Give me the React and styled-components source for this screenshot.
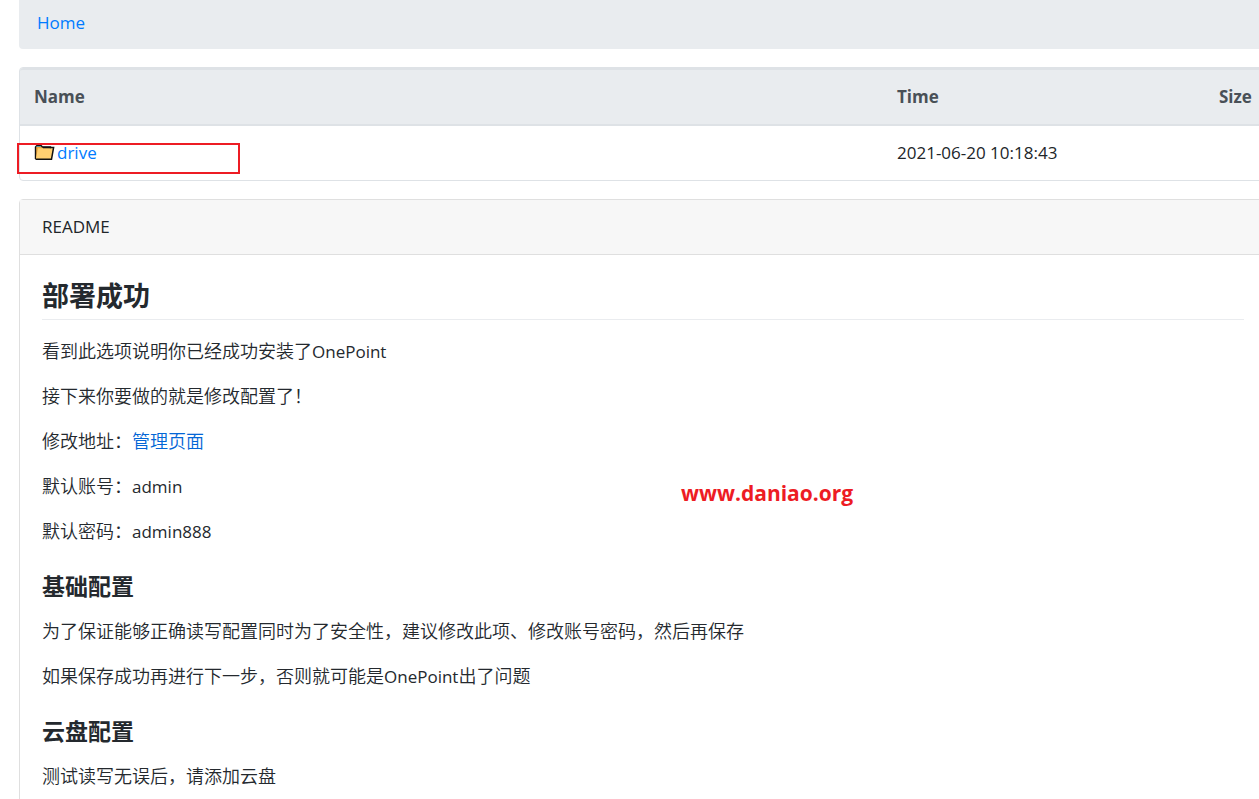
import styled, { createGlobalStyle } from 'styled-components';

const GlobalStyle = createGlobalStyle`
  *, *::before, *::after {
    box-sizing: border-box;
  }

  body {
    margin: 0;
    background: #fff;
    color: #212529;
    font-family: 'Open Sans', 'Noto Sans CJK SC', sans-serif;
    font-size: 17px;
    line-height: 27px;
    overflow-x: hidden;
  }
`;

const Page = styled.div`
  position: relative;
  overflow: hidden;
`;

const Container = styled.main`
  display: flex;
  flex-direction: column;
  gap: 18px;
  margin-right: -8px;
  padding-left: 19px;
`;

const Link = styled.a`
  color: #007bff;
  text-decoration: none;

  &:hover {
    text-decoration: underline;
  }
`;

const Breadcrumb = styled.nav`
  padding: 9px 18px 13px;
  border-radius: 0 0 4px 4px;
  background: #e9ecef;
`;

const TableCard = styled.div`
  border: 1px solid #dee2e6;
  border-radius: 4px;
`;

const FileTable = styled.table`
  width: 100%;
  table-layout: fixed;
  border-spacing: 0;
`;

const HeadCell = styled.th`
  width: ${({ $width }) => $width || 'auto'};
  padding: 13px 14px 14px;
  border-top: 2px solid #dee2e6;
  border-bottom: 2px solid #dee2e6;
  background: #e9ecef;
  color: #495057;
  text-align: left;
  white-space: nowrap;

  &:first-child {
    border-top-left-radius: 3px;
  }
`;

const Cell = styled.td`
  padding: 13px 14px 14px;
`;

const FileName = styled.div`
  position: relative;
  display: flex;
  align-items: center;
  gap: 2px;
`;

const Highlight = styled.span`
  position: absolute;
  top: 4px;
  left: -17px;
  width: 223px;
  height: 31px;
  border: 2px solid #ed1c24;
  pointer-events: none;
`;

const Card = styled.section`
  border: 1px solid #dfdfdf;
  border-radius: 4px;
`;

const CardHeader = styled.header`
  padding: 13px 22px 14px;
  border-bottom: 1px solid #dfdfdf;
  background: #f7f7f7;
`;

const Markdown = styled.article`
  padding: 22px;
  color: #24292e;
  font-size: 18px;
  font-weight: 350;

  p {
    margin: 0 0 18px;
  }
`;

const Title = styled.h1`
  margin: 0 0 18px;
  padding-bottom: 4px;
  border-bottom: 1px solid #eaecef;
  font-size: 27px;
  line-height: 38px;
`;

const Subtitle = styled.h2`
  margin: 27px 0 18px;
  font-size: 23px;
  line-height: 28px;
`;

const Latin = styled.span`
  font-size: 17px;
  font-weight: 400;
`;

const MarkdownLink = styled(Link)`
  color: #0366d6;
`;

const Watermark = styled.div`
  position: absolute;
  top: 480px;
  left: 681px;
  color: #ed1c24;
  font-size: 21px;
  font-weight: bold;
`;

const FolderIcon = () => (
  <svg width='21' height='17' viewBox='0 0 21 17' aria-hidden='true'>
    <path d='M1.5 15V3L3 1.5h4L8.5 3h8v2' fill='#e8a33d' stroke='#111' strokeWidth='1.4' />
    <path d='M2.5 2.5h4.5' stroke='#5b9aa0' strokeWidth='1' />
    <path d='M4 4.2h15.6L17.6 15.3H1.8z' fill='#ffd071' />
    <path d='M1.5 15.3h16L19.6 3.4H9' fill='none' stroke='#111' strokeWidth='1.5' />
  </svg>
);

const files = [{ name: 'drive', time: '2021-06-20 10:18:43', size: '' }];

function App() {
  return (
    <Page lang='zh-CN'>
      <GlobalStyle />
      <Container>
        <Breadcrumb>
          <Link href='#home'>Home</Link>
        </Breadcrumb>

        <TableCard>
          <FileTable>
            <thead>
              <tr>
                <HeadCell>Name</HeadCell>
                <HeadCell $width='322px'>Time</HeadCell>
                <HeadCell $width='61px'>Size</HeadCell>
              </tr>
            </thead>
            <tbody>
              {files.map((file) => (
                <tr key={file.name}>
                  <Cell>
                    <FileName>
                      <FolderIcon />
                      <Link href={`#${file.name}`}>{file.name}</Link>
                      <Highlight />
                    </FileName>
                  </Cell>
                  <Cell>{file.time}</Cell>
                  <Cell>{file.size}</Cell>
                </tr>
              ))}
            </tbody>
          </FileTable>
        </TableCard>

        <Card>
          <CardHeader>README</CardHeader>
          <Markdown>
            <Title>部署成功</Title>
            <p>
              看到此选项说明你已经成功安装了<Latin>OnePoint</Latin>
            </p>
            <p>接下来你要做的就是修改配置了！</p>
            <p>
              修改地址：<MarkdownLink href='#admin'>管理页面</MarkdownLink>
            </p>
            <p>
              默认账号：<Latin>admin</Latin>
            </p>
            <p>
              默认密码：<Latin>admin888</Latin>
            </p>
            <Subtitle>基础配置</Subtitle>
            <p>为了保证能够正确读写配置同时为了安全性，建议修改此项、修改账号密码，然后再保存</p>
            <p>
              如果保存成功再进行下一步，否则就可能是<Latin>OnePoint</Latin>出了问题
            </p>
            <Subtitle>云盘配置</Subtitle>
            <p>测试读写无误后，请添加云盘</p>
          </Markdown>
        </Card>
      </Container>
      <Watermark>www.daniao.org</Watermark>
    </Page>
  );
}

export default App;
